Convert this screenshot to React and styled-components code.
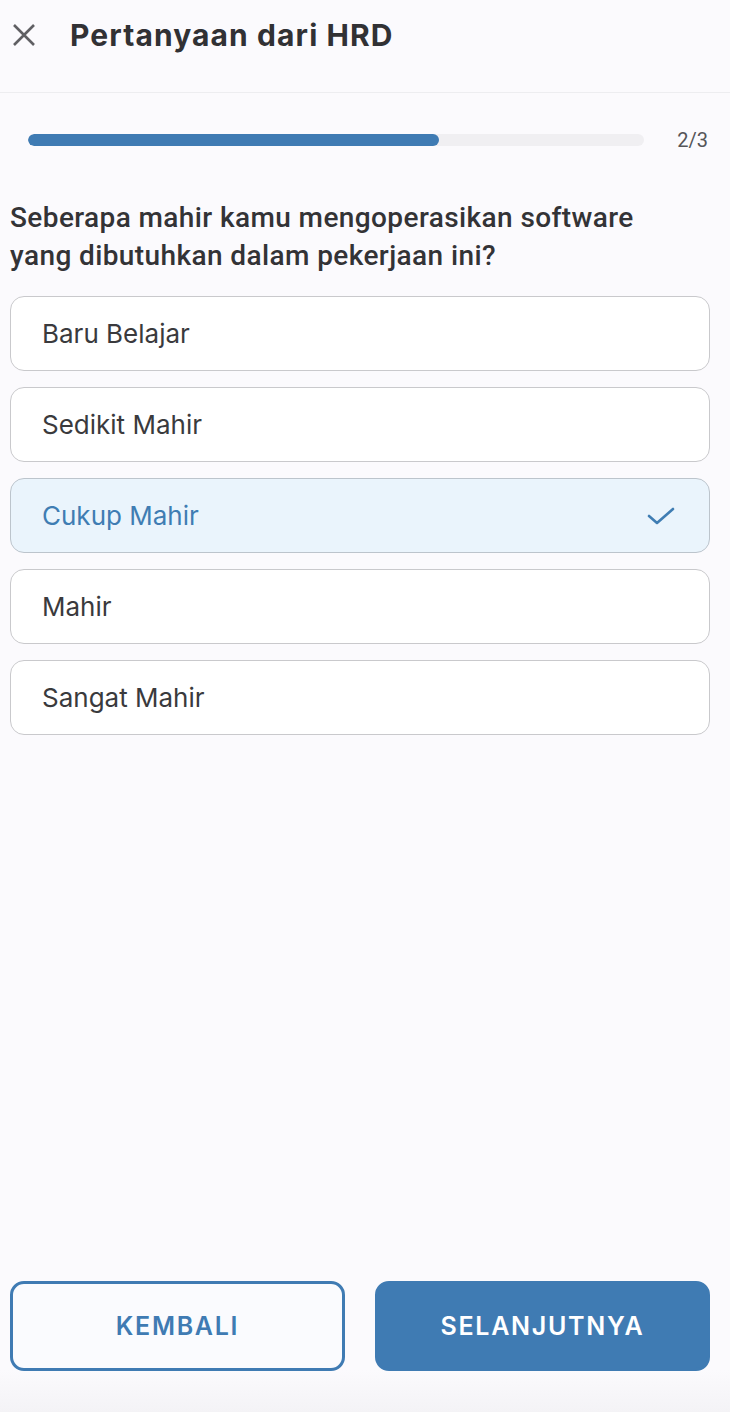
import styled, { createGlobalStyle } from "styled-components";

const GlobalStyle = createGlobalStyle`
  html, body {
    margin: 0;
    padding: 0;
    background: #fbfafd;
  }
  * { box-sizing: border-box; }
`;

const Page = styled.div`
  min-height: 1412px;
  display: flex;
  flex-direction: column;
  font-family: Roboto, "Noto Sans", sans-serif;
  color: #333336;
  background: linear-gradient(to bottom, #fbfafd 0, #fbfafd 1370px, #f4f3f6 1412px);
`;

const Header = styled.header`
  height: 93px;
  display: flex;
  align-items: center;
  padding: 0 0 22px 12px;
  gap: 34px;
  border-bottom: 1px solid #ededf0;
`;

const CloseButton = styled.button`
  border: 0;
  background: none;
  padding: 0;
  width: 24px;
  height: 24px;
  display: flex;
  color: #5f5f63;
`;

const Title = styled.h1`
  margin: 0;
  font-family: Inter, "Noto Sans", sans-serif;
  font-size: 30px;
  font-weight: 700;
  color: #313134;
  letter-spacing: 1.1px;
`;

const ProgressRow = styled.div`
  display: flex;
  align-items: center;
  padding: 35px 22px 0 28px;
  gap: 33px;
`;

const Track = styled.div`
  flex: 1;
  height: 12px;
  border-radius: 6px;
  background: #f0eff2;
  overflow: hidden;
`;

const Fill = styled.div`
  height: 100%;
  border-radius: 6px;
  background: #3f7bb3;
`;

const Count = styled.span`
  font-size: 20px;
  color: #555558;
`;

const Question = styled.h2`
  margin: 0;
  padding: 47px 70px 0 10px;
  font-size: 28px;
  line-height: 38px;
  font-weight: 500;
  letter-spacing: 0.4px;
  color: #333336;
`;

const Options = styled.div`
  display: flex;
  flex-direction: column;
  gap: 16px;
  padding: 21px 20px 0 10px;
`;

const Option = styled.button`
  height: 75px;
  display: flex;
  align-items: center;
  justify-content: space-between;
  padding: 0 34px 0 31px;
  border-radius: 14px;
  border: 1.5px solid ${(p) => (p.$selected ? "#bcc4cc" : "#c9c9cc")};
  background: ${(p) => (p.$selected ? "#eaf4fc" : "#ffffff")};
  color: ${(p) => (p.$selected ? "#3f7db3" : "#3a3a3d")};
  font-family: Inter, "Noto Sans", sans-serif;
  font-size: 26px;
  font-weight: 400;
  text-align: left;
`;

const Spacer = styled.div`
  flex: 1;
`;

const Footer = styled.footer`
  display: grid;
  grid-template-columns: 1fr 1fr;
  gap: 30px;
  padding: 0 20px 41px 10px;
`;

const ActionButton = styled.button`
  height: 90px;
  border-radius: 14px;
  border: 3px solid #3f7bb3;
  background: ${(p) => (p.$primary ? "#3f7bb3" : "#fafbfe")};
  color: ${(p) => (p.$primary ? "#ffffff" : "#3f7bb3")};
  font-family: Inter, "Noto Sans", sans-serif;
  font-size: 25px;
  font-weight: 600;
  letter-spacing: 1.7px;
`;

const options = ["Baru Belajar", "Sedikit Mahir", "Cukup Mahir", "Mahir", "Sangat Mahir"];

export default function App() {
  const selected = "Cukup Mahir";
  return (
    <Page>
      <GlobalStyle />
      <Header>
        <CloseButton aria-label="close">
          <svg width="24" height="24" viewBox="0 0 24 24" fill="none" stroke="currentColor" strokeWidth="2.6" strokeLinecap="butt">
            <path d="M2 2L22 22M22 2L2 22" />
          </svg>
        </CloseButton>
        <Title>Pertanyaan dari HRD</Title>
      </Header>
      <ProgressRow>
        <Track>
          <Fill style={{ width: `${(2 / 3) * 100}%` }} />
        </Track>
        <Count>2/3</Count>
      </ProgressRow>
      <Question>
        Seberapa mahir kamu mengoperasikan software yang dibutuhkan dalam pekerjaan ini?
      </Question>
      <Options>
        {options.map((o) => (
          <Option key={o} $selected={o === selected}>
            {o}
            {o === selected && (
              <svg width="28" height="20" viewBox="0 0 28 20" fill="none" stroke="#3f7db3" strokeWidth="2.6" strokeLinecap="round" strokeLinejoin="round">
                <path d="M2 10L10 17L26 3" />
              </svg>
            )}
          </Option>
        ))}
      </Options>
      <Spacer />
      <Footer>
        <ActionButton>KEMBALI</ActionButton>
        <ActionButton $primary>SELANJUTNYA</ActionButton>
      </Footer>
    </Page>
  );
}
